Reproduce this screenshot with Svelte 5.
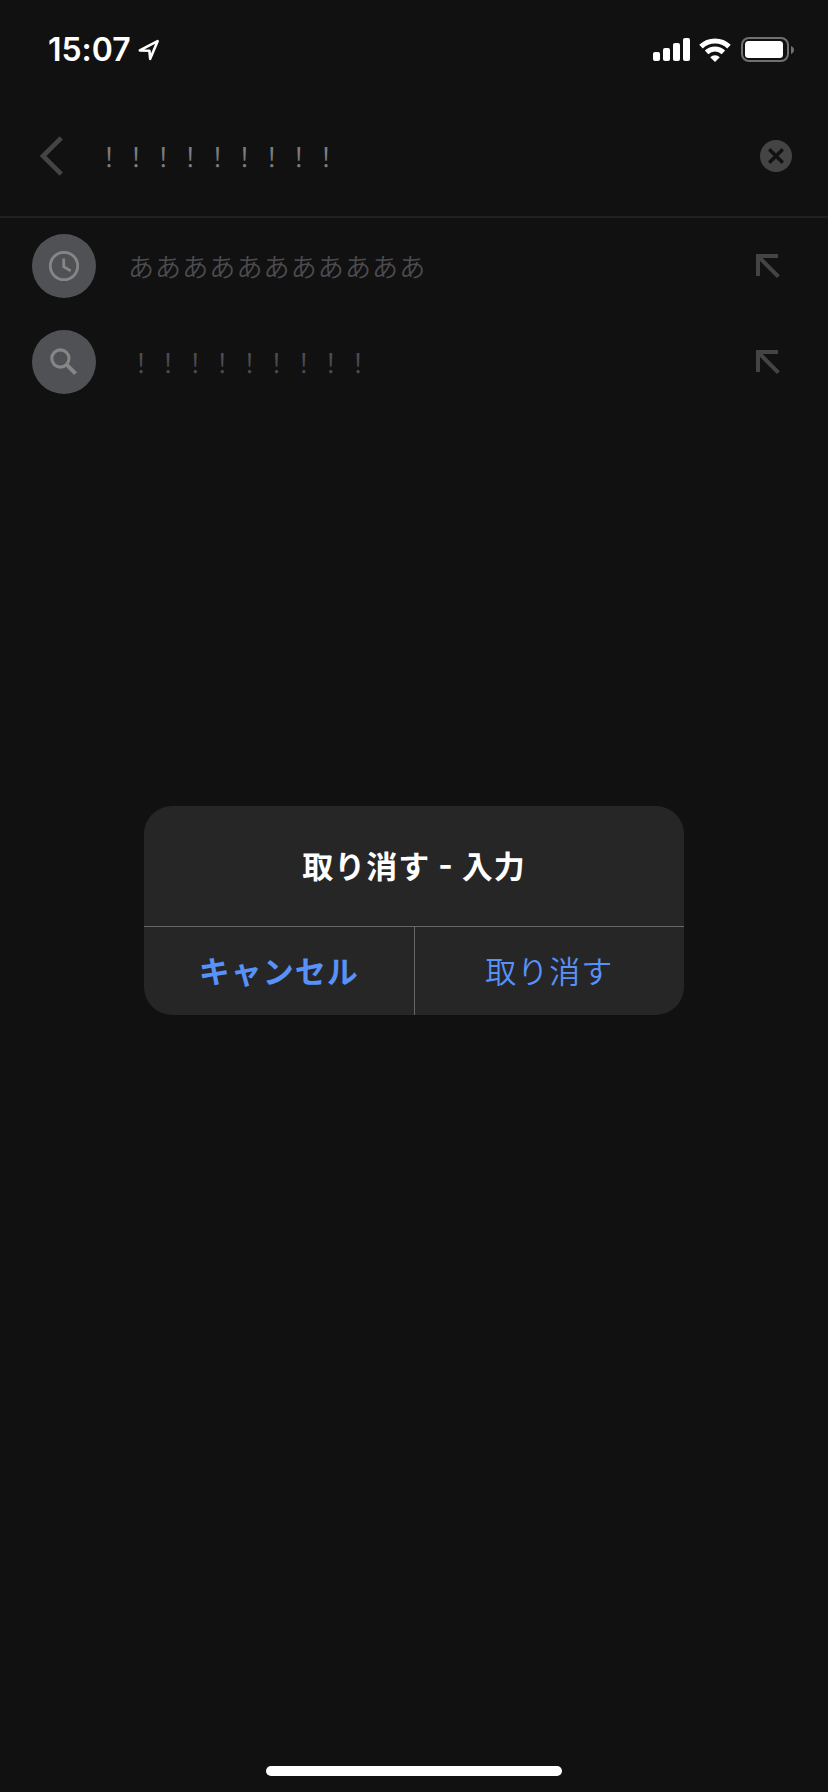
<script lang="ts">
	let query = $state('！！！！！！！！！');

	const suggestions = [
		{ kind: 'history', text: 'あああああああああああ' },
		{ kind: 'search', text: '！！！！！！！！！' }
	];

	const bars = [9, 13, 18, 23];
</script>

<div class="screen">
	<header class="status">
		<div class="clock">
			<span class="time">15:07</span>
			<svg class="location" width="22" height="22" viewBox="0 0 22 22">
				<path d="M1.8 11.4 19.6 2.2 12.2 19.8 11.4 11.8Z" />
			</svg>
		</div>
		<div class="indicators">
			<div class="signal">
				{#each bars as height}
					<span style="height: {height}px"></span>
				{/each}
			</div>
			<svg class="wifi" width="32" height="24" viewBox="0 0 32 24">
				<path d="M2 8.6a20 20 0 0 1 28 0" />
				<path d="M7.6 14.4a12.2 12.2 0 0 1 16.8 0" />
				<path class="dot" d="M11.2 19.2a6.8 6.8 0 0 1 9.6 0L16 24Z" />
			</svg>
			<div class="battery">
				<div class="case"><div class="level"></div></div>
				<svg width="3" height="8" viewBox="0 0 3 8">
					<path d="M0 0c4 1.6 4 6.4 0 8Z" />
				</svg>
			</div>
		</div>
	</header>

	<div class="search">
		<svg class="back" width="24" height="40" viewBox="0 0 24 40">
			<path d="M21.3 1.8 3 20l18.3 18.2" />
		</svg>
		<span class="query">{query}</span>
		<svg class="clear" width="32" height="32" viewBox="0 0 32 32">
			<circle cx="16" cy="16" r="16" />
			<path d="m9.2 9.2 13.6 13.6M22.8 9.2 9.2 22.8" />
		</svg>
	</div>

	<ul class="suggestions">
		{#each suggestions as item}
			<li>
				<div class="badge">
					{#if item.kind === 'history'}
						<svg width="32" height="32" viewBox="0 0 32 32">
							<circle cx="16" cy="16" r="13.7" />
							<path d="M15.7 8.5v8.2l7 4.2" />
						</svg>
					{:else}
						<svg width="32" height="32" viewBox="0 0 32 32">
							<circle class="lens" cx="12.4" cy="12.5" r="8.6" />
							<path class="handle" d="m18.6 18.7 9 9" />
						</svg>
					{/if}
				</div>
				<span class="text">{item.text}</span>
				<svg class="fill" width="24" height="24" viewBox="0 0 24 24">
					<path d="M2 22V2h20M2 2l20.4 20.6" />
				</svg>
			</li>
		{/each}
	</ul>

	<div class="overlay">
		<div class="alert" role="alertdialog" aria-labelledby="alert-title">
			<h2 id="alert-title">取り消す<span class="dash">-</span>入力</h2>
			<div class="actions">
				<button class="cancel">キャンセル</button>
				<button>取り消す</button>
			</div>
		</div>
	</div>

	<div class="home"></div>
</div>

<style>
	:global(body) {
		background: #111;
	}
	.screen {
		position: relative;
		display: flex;
		flex-direction: column;
		width: 828px;
		height: 1792px;
		background: #111;
		font-family: 'Noto Sans CJK JP', sans-serif;
		overflow: hidden;
	}
	svg {
		display: block;
		flex: none;
		fill: none;
	}

	.status {
		display: flex;
		justify-content: space-between;
		align-items: center;
		box-sizing: border-box;
		height: 88px;
		padding: 11px 34px 0 48px;
	}
	.clock {
		display: flex;
		align-items: center;
		gap: 7px;
	}
	.time {
		color: #fff;
		font: 600 32px/40px Inter, sans-serif;
		letter-spacing: -0.05px;
	}
	.location path {
		stroke: #fff;
		stroke-width: 2.6;
		stroke-linejoin: round;
	}
	.indicators {
		display: flex;
		align-items: center;
	}
	.signal {
		display: flex;
		align-items: flex-end;
		gap: 3px;
		margin-right: 9px;
	}
	.signal span {
		width: 7px;
		border-radius: 2px;
		background: #fff;
	}
	.wifi {
		margin-right: 10px;
	}
	.wifi path {
		stroke: #fff;
		stroke-width: 5;
	}
	.wifi .dot {
		fill: #fff;
		stroke: none;
	}
	.battery {
		display: flex;
		align-items: center;
		gap: 2px;
	}
	.battery path {
		fill: #707070;
	}
	.case {
		box-sizing: border-box;
		width: 48px;
		height: 25px;
		padding: 2px;
		border: 2px solid #707070;
		border-radius: 8px;
	}
	.level {
		width: 38px;
		height: 17px;
		border-radius: 3.5px;
		background: #fff;
	}

	.search {
		display: flex;
		align-items: center;
		box-sizing: border-box;
		height: 130px;
		padding: 8px 36px 0 40px;
		border-bottom: 2px solid #212121;
	}
	.back path {
		stroke: #444;
		stroke-width: 4.6;
	}
	.query {
		flex: 1;
		margin-left: 32px;
		padding-bottom: 2px;
		color: #7c7c7c;
		font-size: 26px;
		font-weight: 350;
		letter-spacing: 1.12px;
	}
	.clear circle {
		fill: #444;
	}
	.clear path {
		stroke: #111;
		stroke-width: 3.4;
	}

	.suggestions {
		flex: 1;
		margin: 0;
		padding: 0;
		list-style: none;
	}
	li {
		display: flex;
		align-items: center;
		height: 96px;
		padding: 0 48px 0 32px;
	}
	.badge {
		display: grid;
		place-items: center;
		width: 64px;
		height: 64px;
		border-radius: 50%;
		background: #505155;
	}
	.badge circle,
	.badge path {
		stroke: #858685;
		stroke-width: 2.8;
	}
	.badge .lens {
		stroke-width: 3.1;
	}
	.badge .handle {
		stroke-width: 4;
	}
	.text {
		flex: 1;
		margin-left: 32px;
		padding-bottom: 2px;
		color: #4c4b50;
		font-size: 26px;
		font-weight: 350;
		letter-spacing: 1.12px;
	}
	.fill path {
		stroke: #444;
		stroke-width: 4;
	}

	.overlay {
		position: absolute;
		inset: 29px 0 0;
		display: flex;
		align-items: center;
		justify-content: center;
	}
	.alert {
		width: 540px;
		border-radius: 28px;
		background: #262626;
		overflow: hidden;
	}
	h2 {
		display: flex;
		align-items: center;
		justify-content: center;
		box-sizing: border-box;
		height: 120px;
		margin: 0;
		padding-bottom: 4px;
		color: #fff;
		font-size: 31px;
		font-weight: 700;
		letter-spacing: 1px;
	}
	.dash {
		margin: 0 8px;
		font-family: Inter, sans-serif;
	}
	.actions {
		display: flex;
		height: 88px;
		border-top: 1px solid #666;
	}
	button {
		flex: 1;
		padding: 0 0 4px;
		border: 0;
		background: none;
		color: #5891f8;
		font-family: inherit;
		font-size: 31px;
		font-weight: 350;
		letter-spacing: 1px;
	}
	.cancel {
		border-right: 1px solid #666;
		font-weight: 700;
	}

	.home {
		align-self: center;
		width: 296px;
		height: 10px;
		margin-bottom: 16px;
		border-radius: 5px;
		background: #fff;
	}
</style>
